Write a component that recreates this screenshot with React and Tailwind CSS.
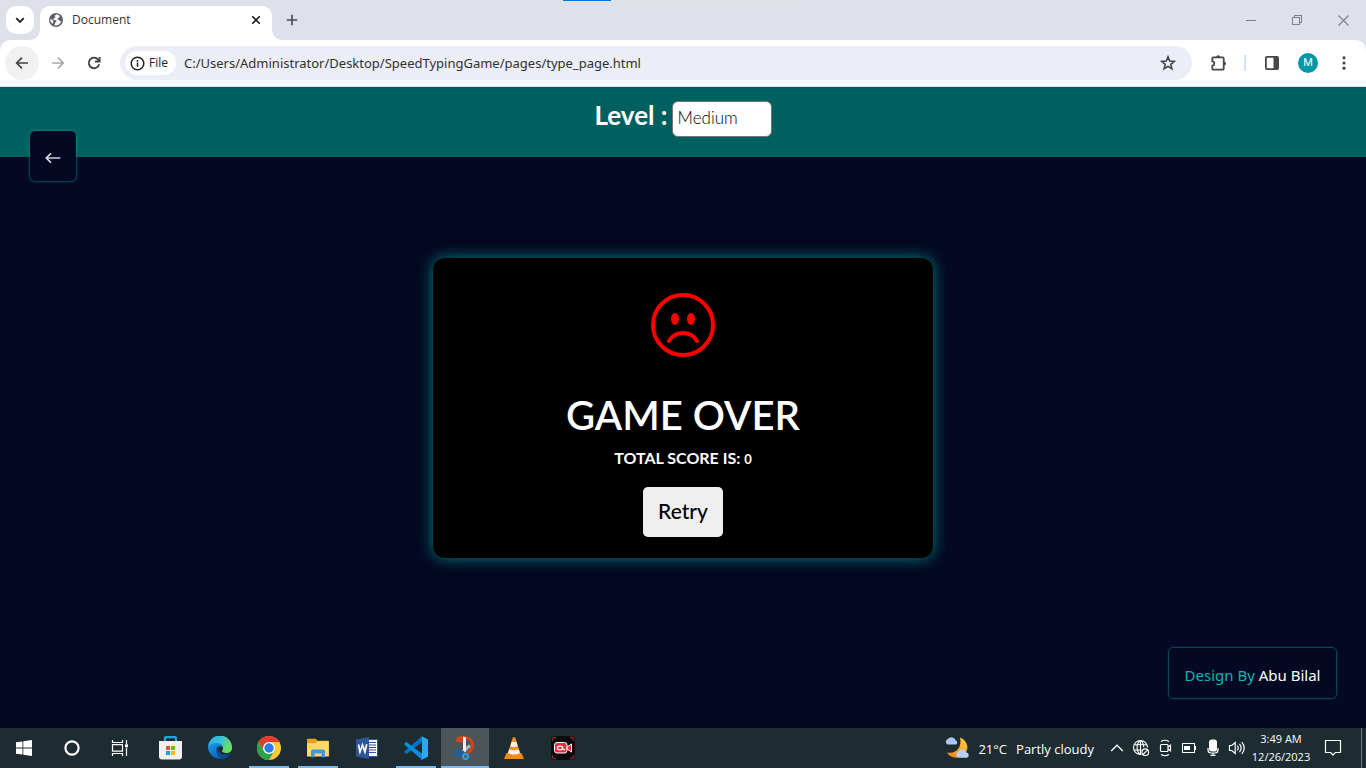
import React from "react";

/* ---------- Browser chrome ---------- */

function TabStrip() {
  return (
    <div className="relative flex h-10 items-start bg-[#dee1e9] pl-1.5">
      <div className="absolute left-1/2 top-0 ml-[-120px] flex h-px w-60">
        <span className="w-12 bg-[#0078d7]" />
        <span className="flex-1 bg-[#e4e4e6]" />
      </div>
      <button
        type="button"
        aria-label="Search tabs"
        className="mt-1.5 flex h-7 w-7 items-center justify-center rounded-[10px] bg-white"
      >
        <svg width="12" height="12" viewBox="0 0 12 12" fill="none" stroke="#1f2023" strokeWidth="1.8">
          <path d="M2.200 4.200 6 7.900l3.800-3.700" />
        </svg>
      </button>
      <div className="relative ml-1.5 mt-1.5 flex h-[34px] w-[232px] items-center rounded-t-[10px] bg-white pb-1.5 pl-2 pr-2">
        <svg className="absolute -left-2.5 bottom-0" width="10" height="10" viewBox="0 0 10 10">
          <path d="M10 0v10H0A10 10 0 0 0 10 0Z" fill="#fff" />
        </svg>
        <svg className="absolute -right-2.5 bottom-0" width="10" height="10" viewBox="0 0 10 10">
          <path d="M0 0v10h10A10 10 0 0 1 0 0Z" fill="#fff" />
        </svg>
        <svg width="16" height="16" viewBox="0 0 16 16">
          <circle cx="8" cy="8" r="7" fill="#5b5e63" />
          <path
            d="M9.2 2.3c-.6.5-2.2.6-2.4 1.6-.1.7.6.8.5 1.5-.2.9-1.700.7-1.900 1.500-.1.7.6 1 1.500 1 1.300 0 1.600.5 1.600 1.200 0 .8-1.300.9-1.300 1.800 0 .7-.4 1.600-.9 2.600 3.800.6 6.300-1.500 7.100-4.500-.8.4-1.600.3-2-.4-.3-.7-.9-.7-1.500-1-.9-.5-.4-1.700.6-1.700.9 0 .8-1.500 1.200-2C11 3.200 10.200 2.600 9.200 2.300Z"
            fill="#fff"
          />
          <path d="M2.200 7.100c.9.1 1.700.8 2.700 1.100.7.200.8.9.400 1.400-.4.500-.200 1.500-.5 2.300C3 10.800 2 9 2.200 7.100Z" fill="#fff" />
        </svg>
        <span className="ml-2 flex-1 text-[12px] leading-4 text-[#303236]">Document</span>
        <button type="button" aria-label="Close tab" className="flex h-4 w-4 items-center justify-center">
          <svg width="10" height="10" viewBox="0 0 10 10" stroke="#1f2023" strokeWidth="1.6">
            <path d="m1.200 1.200 7.600 7.600M8.800 1.200 1.200 8.800" />
          </svg>
        </button>
      </div>
      <button type="button" aria-label="New tab" className="ml-1.5 mt-1.5 flex h-7 w-7 items-center justify-center">
        <svg width="12" height="12" viewBox="0 0 12 12" stroke="#45474a" strokeWidth="1.6">
          <path d="M6 .8v10.400M.8 6h10.400" />
        </svg>
      </button>
      <div className="ml-auto flex h-10 text-[#7d7f85]">
        <button type="button" aria-label="Minimize" className="flex w-[46px] items-center justify-center">
          <svg width="10" height="10" viewBox="0 0 10 10" stroke="currentColor" shapeRendering="crispEdges">
            <path d="M0 5.500h10" />
          </svg>
        </button>
        <button type="button" aria-label="Restore" className="flex w-[46px] items-center justify-center">
          <svg width="11" height="11" viewBox="0 0 11 11" fill="none" stroke="currentColor" shapeRendering="crispEdges">
            <path d="M.5 2.500h7v7h-7zM2.500 2.500v-2h7v7h-2" />
          </svg>
        </button>
        <button type="button" aria-label="Close" className="flex w-[46px] items-center justify-center">
          <svg width="11" height="11" viewBox="0 0 11 11" stroke="currentColor" strokeWidth="1.100">
            <path d="m.5.5 10 10M10.500.5l-10 10" />
          </svg>
        </button>
      </div>
    </div>
  );
}

function Toolbar() {
  return (
    <div className="bg-[#dee1e9]">
      <div className="flex h-[47px] items-center rounded-t-[10px] border-b border-[#dfe3e6] bg-white px-[5px]">
        <button type="button" aria-label="Back" className="flex h-[34px] w-[34px] items-center justify-center rounded-full bg-[#f1f1f1]">
          <svg width="14" height="14" viewBox="0 0 14 14" fill="none" stroke="#3f4144" strokeWidth="1.700">
            <path d="M13 7H2M7 1.700 1.700 7 7 12.300" />
          </svg>
        </button>
        <button type="button" aria-label="Forward" className="ml-[2px] flex h-[34px] w-[34px] items-center justify-center">
          <svg width="14" height="14" viewBox="0 0 14 14" fill="none" stroke="#a9abad" strokeWidth="1.700">
            <path d="M1 7h11M7 1.700 12.300 7 7 12.300" />
          </svg>
        </button>
        <button type="button" aria-label="Reload" className="ml-[2px] flex h-[34px] w-[34px] items-center justify-center">
          <svg width="14" height="14" viewBox="0 0 14 14" fill="none" stroke="#3f4144" strokeWidth="1.800">
            <path d="M12.200 8.300A5.300 5.300 0 1 1 11.200 3.600L12.500 5" />
            <path d="M12.600.9v4.600H8" />
          </svg>
        </button>
        <div className="ml-[9px] flex h-[34px] flex-1 items-center rounded-full bg-[#ebeef7] pl-[5px] pr-4">
          <button type="button" className="flex h-6 w-[51px] items-center rounded-full bg-white pl-[5px] text-[12px] font-medium leading-4 text-[#202124]">
            <svg className="mr-1" width="15" height="15" viewBox="0 0 16 16" fill="none" stroke="#202124" strokeWidth="1.600">
              <circle cx="8" cy="8" r="6.700" />
              <path d="M8 7v4.500M8 4.300v1.700" />
            </svg>
            File
          </button>
          <input
            type="text"
            aria-label="Address"
            defaultValue="C:/Users/Administrator/Desktop/SpeedTypingGame/pages/type_page.html"
            className="ml-2 h-6 min-w-0 flex-1 bg-transparent font-['Noto_Sans',sans-serif] text-[13px] text-[#303134] outline-none"
          />
          <button type="button" aria-label="Bookmark this page">
            <svg width="16" height="16" viewBox="0 0 16 16" fill="none" stroke="#45474a" strokeWidth="1.600">
              <path d="m8 1.900 1.700 4.200 4.500.4-3.400 2.900 1.100 4.400L8 11.400l-3.900 2.400 1.100-4.400-3.400-2.900 4.500-.4Z" />
            </svg>
          </button>
        </div>
        <button type="button" aria-label="Extensions" className="ml-[18px]">
          <svg width="18" height="18" viewBox="0 0 18 18" fill="none">
            <path d="M2.300 4.300q0-1 1-1h9.400q1 0 1 1v10.400q0 1-1 1H3.300q-1 0-1-1v-3c2.700-.2 2.700-4.200 0-4.400Z" stroke="#45474a" strokeWidth="1.800" />
            <path d="M6.200 3.200a2 2 0 0 1 4 0ZM14 7.500a2 2 0 0 1 0 4Z" fill="#45474a" />
          </svg>
        </button>
        <span className="ml-4 h-4 w-0.5 bg-[#d2e2fb]" />
        <button type="button" aria-label="Side panel" className="ml-[18px]">
          <svg width="16" height="16" viewBox="0 0 16 16" fill="none">
            <rect x="1.900" y="1.900" width="12.200" height="12.200" rx="1" stroke="#45474a" strokeWidth="1.800" />
            <path d="M9.500 2h4.500v12H9.500z" fill="#45474a" />
          </svg>
        </button>
        <button type="button" aria-label="Profile" className="ml-[18px] h-5 w-5 rounded-full bg-[#0097a7] text-center font-['Roboto',sans-serif] text-[11px] leading-5 text-white">
          M
        </button>
        <button type="button" aria-label="Menu" className="ml-[18px] mr-[9px]">
          <svg width="16" height="16" viewBox="0 0 16 16" fill="#45474a">
            <circle cx="8" cy="2.800" r="1.600" />
            <circle cx="8" cy="8" r="1.600" />
            <circle cx="8" cy="13.200" r="1.600" />
          </svg>
        </button>
      </div>
    </div>
  );
}

/* ---------- Game page ---------- */

function GamePage() {
  return (
    <div className="relative flex flex-1 flex-col bg-[#040822] font-['Lato',sans-serif]">
      <header className="flex h-[70px] items-start justify-center bg-[#005f5f] pt-3.5">
        <label htmlFor="level" className="mr-1 text-[26px] font-bold leading-7 text-white">
          Level :
        </label>
        <select
          id="level"
          defaultValue="Medium"
          className="h-9 w-[100px] appearance-none rounded-md border border-[#767676] bg-white px-[5px] pb-0.5 text-[17px] font-light leading-6 text-black"
        >
          <option>Easy</option>
          <option>Medium</option>
          <option>Hard</option>
        </select>
      </header>
      <a
        href="#home"
        aria-label="Back to home"
        className="absolute left-[30px] top-11 flex h-[50px] w-[46px] items-center justify-center rounded-[5px] bg-[#040822] pt-1 shadow-[0_0_3px_#00a0a0]"
      >
        <svg width="16" height="12" viewBox="0 0 16 12" fill="none">
          <path d="M1.500 6H15.300" stroke="#b9b9cc" strokeWidth="1.700" />
          <path d="M6 1.200 1.300 6 6 10.800" stroke="#e4e4ee" strokeWidth="1.600" />
        </svg>
      </a>
      <main className="flex flex-1 items-center justify-center pb-[70px]">
        <section className="flex h-[300px] w-[500px] flex-col items-center rounded-xl bg-black pt-[35px] text-white shadow-[0_0_15px_#008080]">
          <svg width="64" height="64" viewBox="0 0 64 64" fill="none">
            <circle cx="32" cy="32" r="30" stroke="#f00" strokeWidth="4" />
            <ellipse cx="24" cy="26" rx="4" ry="6" fill="#f00" />
            <ellipse cx="40" cy="26" rx="4" ry="6" fill="#f00" />
            <path d="M18 48a16.200 16.200 0 0 1 28 0" stroke="#f00" strokeWidth="4" strokeLinecap="round" />
          </svg>
          <h1 className="mt-[34px] text-[40px] font-semibold leading-[48px]">GAME OVER</h1>
          <p className="mt-[9px] text-[16px] font-bold leading-5">
            TOTAL SCORE IS: <span className="text-[13px] leading-4">0</span>
          </p>
          <button type="button" className="mt-[19px] h-[50px] w-20 rounded-[5px] bg-[#efefef] pb-0.5 text-[21px] font-medium text-black">
            Retry
          </button>
        </section>
      </main>
      <footer className="absolute bottom-[29px] right-[29px] flex h-[52px] w-[169px] items-center justify-center rounded-[5px] border border-[#024a50] pt-1 font-['Noto_Sans',sans-serif] text-[15px] text-[#08b5b5] shadow-[0_0_3px_#00505080]">
        <span>
          Design By <span className="text-white">Abu Bilal</span>
        </span>
      </footer>
    </div>
  );
}

/* ---------- Taskbar icons ---------- */

const WindowsIcon = () => (
  <svg width="16" height="16" viewBox="0 0 16 16" fill="#fff">
    <path d="M0 2.300 6.500 1.400v6.200H0zM7.300 1.300 16 0v7.600H7.300zM0 8.400h6.500v6.200L0 13.700zM7.300 8.400H16V16l-8.700-1.300z" />
  </svg>
);

const CortanaIcon = () => (
  <svg width="16" height="16" viewBox="0 0 16 16" fill="none">
    <circle cx="8" cy="8" r="6.600" stroke="#fff" strokeWidth="2.200" />
  </svg>
);

const TaskViewIcon = () => (
  <svg width="18" height="16" viewBox="0 0 18 16" fill="none" stroke="#fff" strokeWidth="1.200">
    <path d="M1.500 0v2.500h10V0M1.500 16v-2.500h10V16M1.500 4.700h10v6.500h-10zM15.500 0v4M15.500 8v8" />
    <path d="M14 4.300h3v3h-3z" fill="#fff" stroke="none" />
  </svg>
);

const StoreIcon = () => (
  <svg width="24" height="24" viewBox="0 0 24 24">
    <path d="M6 6V2.200q0-1 1-1h9q1 0 1 1V6" fill="none" stroke="#22a7e5" strokeWidth="2.200" />
    <path d="M0 5h23v15.500q0 3-3 3H3q-3 0-3-3z" fill="#f0f0f0" />
    <path d="M7 10h4v4H7z" fill="#f25022" />
    <path d="M12 10h4v4h-4z" fill="#7fba00" />
    <path d="M7 15h4v4H7z" fill="#00a4ef" />
    <path d="M12 15h4v4h-4z" fill="#ffb900" />
  </svg>
);

const EdgeIcon = () => (
  <svg width="24" height="24" viewBox="0 0 24 24">
    <defs>
      <linearGradient id="edge-top" x1="0" y1="0" x2="1" y2=".4">
        <stop offset="0" stopColor="#2aa9e8" />
        <stop offset=".5" stopColor="#35c1dc" />
        <stop offset="1" stopColor="#6be05c" />
      </linearGradient>
      <linearGradient id="edge-left" x1="0" y1="0" x2=".6" y2="1">
        <stop offset="0" stopColor="#1a9ae3" />
        <stop offset="1" stopColor="#0c62c1" />
      </linearGradient>
    </defs>
    <path d="M0 12a12 12 0 0 1 24-1c.3 4-2.500 6-5.600 6-2.900 0-4.400-1-4.400-1.900 0-.8 1.100-1.200 1.100-3.100 0-2.400-2.700-4.300-6-4.300C4.500 7.700.8 9.500 0 12Z" fill="url(#edge-top)" />
    <path d="M0 12c.4-3 4-5 8.500-5 4 0 6.600 2.300 6.600 5-1.300-2-3.800-2.300-5-1-2 1.800-1.600 5.500.8 8 1.700 1.800 3.800 2.700 6 2.700A12 12 0 0 1 0 12Z" fill="url(#edge-left)" />
    <path d="M8.300 13.500c0-2 1.200-3 2-3.200-1.300 2.900.5 8.200 6.200 8.200 2.400 0 4.400-.9 5.500-1.400.5-.1.6.2.3.7a12 12 0 0 1-6.700 5.600C11.500 23 8.300 18 8.300 13.500Z" fill="#114a8b" />
  </svg>
);

const ChromeIcon = () => (
  <svg width="24" height="24" viewBox="0 0 24 24">
    <circle cx="12" cy="12" r="12" fill="#fcc934" />
    <path d="M12 6H22.400A12 12 0 0 0 1.600 6l5.200 9Z" fill="#e33b2e" />
    <path d="M1.600 6A12 12 0 0 0 12 24l5.200-9-10.400 0Z" fill="#2ba24c" />
    <circle cx="12" cy="12" r="6" fill="#fff" />
    <circle cx="12" cy="12" r="4.700" fill="#2a7de9" />
  </svg>
);

const FolderIcon = () => (
  <svg width="24" height="24" viewBox="0 0 24 24">
    <path d="M1 3.500q0-.7.7-.7h8l2 2H22q.8 0 .8.800V20H1z" fill="#e3a21a" />
    <path d="M1 7.200h8.500l2-2H22.800V20.500H1z" fill="#ffd86b" />
    <path d="M5 21.200V15q0-1.600 1.600-1.600h10.800Q19 13.400 19 15v6.200h-3.500v-3.700h-7v3.700z" fill="#3d9ae0" />
  </svg>
);

const WordIcon = () => (
  <svg width="24" height="24" viewBox="0 0 24 24">
    <path d="M12 3.500h10.500v17H12z" fill="#fff" stroke="#2b579a" />
    <path d="M14 6.500h7M14 9h7M14 11.500h7M14 14h7M14 16.500h7" stroke="#2b579a" />
    <path d="M1 3.500 14 1v22L1 20.500z" fill="#2b579a" />
    <path d="m3.500 8.500 1.500 7.300L7.500 9l2.400 7 1.800-7.700" fill="none" stroke="#fff" strokeWidth="1.700" />
  </svg>
);

const CodeIcon = () => (
  <svg width="24" height="24" viewBox="0 0 24 24">
    <path d="m.4 16.300 1.500 1.300q.5.400 1 .1L18 6.300V.3L.4 15.200q-.5.500 0 1.100Z" fill="#0072c0" />
    <path d="M.4 7.700 1.900 6.300q.5-.4 1-.1L18 17.700v6L.4 8.800q-.5-.500 0-1.100Z" fill="#0a8ddb" />
    <path d="M17.600.2 23 2.700q1 .5 1 1.500v15.600q0 1-1 1.500l-5.400 2.500q-.8.300-1.400-.3 1.800.7 1.800-1.200V1.700q0-1.900-1.800-1.200.6-.6 1.400-.3Z" fill="#2aa8f2" />
  </svg>
);

const SnipIcon = () => (
  <svg width="24" height="24" viewBox="0 0 24 24" fill="none">
    <path d="M10 4.800C6.500 5.200 4.500 4.600 4.200 4 5.200 2 8.500 1.200 11.500 1.500c5.500.6 8.700 4 8 8.700-.4 3-2.500 5.500-5 6.300" stroke="#d5431b" strokeWidth="3" />
    <path d="M17 9.500 10 15.500" stroke="#aeb4b8" strokeWidth="3" />
    <path d="M10 .8q1.200-.6 3 1V16l-3-1z" fill="#eceeef" />
    <circle cx="4.500" cy="17.300" r="2.400" stroke="#0f63b5" strokeWidth="2.200" />
    <circle cx="12.500" cy="20.500" r="2.500" stroke="#2f9fe6" strokeWidth="2.200" />
    <path d="m7 17 4-1.500" stroke="#0f63b5" strokeWidth="2" />
  </svg>
);

const VlcIcon = () => (
  <svg width="24" height="24" viewBox="0 0 24 24">
    <path d="M4.500 17h15l2.500 6H2z" fill="#f58a0b" />
    <path d="M10.800 1.500q1.200-.8 2.400 0L18.500 18q-6.500 4-13 0z" fill="#f5901e" />
    <path d="m9.800 5.500-1.500 4.800q3.700 1.500 7.400 0l-1.500-4.800q-2.200 1-4.400 0ZM7.200 13.300l-1.100 3.800q5.900 3 11.800 0l-1.100-3.800q-4.800 2-9.600 0Z" fill="#f2f2f2" />
  </svg>
);

const RecorderIcon = () => (
  <svg width="24" height="24" viewBox="0 0 24 24" fill="none">
    <rect width="24" height="24" rx="4" fill="#0b0b0c" />
    <path d="M1.500 5V3.200Q1.500 1.500 3.200 1.500H5M19 1.500h1.800q1.700 0 1.700 1.700V5M22.500 19v1.800q0 1.700-1.700 1.700H19M5 22.500H3.200q-1.700 0-1.700-1.700V19" stroke="#8e2630" strokeWidth="1.300" />
    <rect x="3.500" y="6.500" width="12.500" height="10.500" rx="2.500" fill="#ea2d45" stroke="#fff" />
    <path d="m16 11 4.500-3v8L16 13z" fill="#ea2d45" stroke="#fff" />
    <ellipse cx="9" cy="12" rx="2.600" ry="1.800" stroke="#fff" strokeWidth="1.200" />
    <path d="m11 12.500 3 1.500" stroke="#fff" strokeWidth="1.200" />
  </svg>
);

const apps = [
  { name: "Microsoft Store", Icon: StoreIcon, state: "idle" },
  { name: "Edge", Icon: EdgeIcon, state: "idle" },
  { name: "Chrome", Icon: ChromeIcon, state: "open" },
  { name: "File Explorer", Icon: FolderIcon, state: "open" },
  { name: "Word", Icon: WordIcon, state: "idle" },
  { name: "Visual Studio Code", Icon: CodeIcon, state: "open" },
  { name: "Snipping Tool", Icon: SnipIcon, state: "active" },
  { name: "VLC", Icon: VlcIcon, state: "idle" },
  { name: "Screen Recorder", Icon: RecorderIcon, state: "idle" },
];

const appStyles = {
  idle: "border-transparent",
  open: "border-transparent",
  active: "border-[#76b9ed] bg-[#4a5659]",
};

function TrayButton({ label, children }) {
  return (
    <button type="button" aria-label={label} className="flex w-6 items-center justify-center">
      {children}
    </button>
  );
}

function Taskbar() {
  return (
    <div className="flex h-10 items-stretch bg-[#1c2c31] text-white">
      <button type="button" aria-label="Start" className="flex w-12 items-center justify-center">
        <WindowsIcon />
      </button>
      <button type="button" aria-label="Cortana" className="flex w-12 items-center justify-center">
        <CortanaIcon />
      </button>
      <button type="button" aria-label="Task View" className="flex w-12 items-center justify-center">
        <TaskViewIcon />
      </button>
      <div className="ml-[3px] flex gap-px">
        {apps.map(({ name, Icon, state }) => (
          <button
            key={name}
            type="button"
            aria-label={name}
            className={`relative flex w-12 items-center justify-center border-b-2 pt-0.5 ${appStyles[state]}`}
          >
            <Icon />
            {state === "open" && <span className="absolute inset-x-1 -bottom-0.5 h-0.5 bg-[#76b9ed]" />}
          </button>
        ))}
      </div>
      <button type="button" className="ml-auto mr-[11px] flex items-center text-[13px] leading-5">
        <svg className="mr-2" width="26" height="24" viewBox="0 0 26 24">
          <defs>
            <linearGradient id="moon" x1="1" y1="0" x2="0" y2="1">
              <stop offset="0" stopColor="#ffcf3f" />
              <stop offset="1" stopColor="#ef7d1a" />
            </linearGradient>
          </defs>
          <path d="M16 1.500C24.500 5 26 14.500 19 19.500 13 23.500 5.500 21.500 3 16.500 11 18.500 18.500 12 16 1.500Z" fill="url(#moon)" />
          <path d="M3.500 8.500a3 3 0 0 1 .3-5.500 4.500 4.500 0 0 1 7.700 1.200 2.300 2.300 0 0 1 .5 4.300Z" fill="#a9c6f4" />
          <path d="M14.500 21.800a3.200 3.200 0 0 1-.3-6 4.600 4.600 0 0 1 8.300.8 2.700 2.700 0 0 1 .5 5.200Z" fill="#b9d0f6" />
        </svg>
        <span className="mr-[9px] pt-0.5">21°C</span>
        <span className="pt-0.5">Partly cloudy</span>
      </button>
      <TrayButton label="Show hidden icons">
        <svg width="14" height="8" viewBox="0 0 14 8" fill="none" stroke="#fff" strokeWidth="1.300">
          <path d="m1.200 7 5.800-5.800L12.800 7" />
        </svg>
      </TrayButton>
      <TrayButton label="Network">
        <svg width="18" height="18" viewBox="0 0 18 18" fill="none" stroke="#fff" strokeWidth="1.100">
          <path d="M9.500 15.500H8A7 7 0 1 1 15.500 8.500M8.500 1.500c-4.600 3.500-4.600 10.500 0 14M8.500 1.500c2.300 1.800 3.300 4.300 3.300 6.800M2 5.700h13M1.500 11h8M8.500 1.500v14" />
          <circle cx="13.300" cy="13.200" r="3.300" />
          <path d="m11 15.500 4.600-4.600" />
        </svg>
      </TrayButton>
      <TrayButton label="Meet Now">
        <svg width="16" height="18" viewBox="0 0 16 18" fill="none" stroke="#fff" strokeWidth="1.200">
          <path d="M4.500 5.500h5.500q1 0 1 1v5q0 1-1 1H4.500q-1 0-1-1v-5q0-1 1-1ZM11 8l2.500-1.800v5.600L11 10M4 2.500q4-2.500 8 0M4 15.500q4 2.500 8 0" />
        </svg>
      </TrayButton>
      <TrayButton label="Battery">
        <svg width="16" height="10" viewBox="0 0 16 10" fill="none" stroke="#fff" shapeRendering="crispEdges">
          <path d="M1.500.5h12v9h-12zM14.500 3v4" />
          <path d="M3 3h6v4H3z" fill="#fff" stroke="none" />
        </svg>
      </TrayButton>
      <TrayButton label="Microphone">
        <svg width="12" height="18" viewBox="0 0 12 18" fill="none" stroke="#fff" strokeWidth="1.200">
          <rect x="2.600" y="1" width="6.800" height="11" rx="2" fill="#fff" />
          <path d="M1 9v2q0 3 3 3h4q3 0 3-3V9M6 14v2.400M3.500 16.400h5" />
        </svg>
      </TrayButton>
      <TrayButton label="Volume">
        <svg width="18" height="16" viewBox="0 0 18 16" fill="none" stroke="#fff" strokeWidth="1.200">
          <path d="M1.500 5.500h2.300L7.200 2.500v11L3.800 10.500H1.500zM9.300 5.500q1.800 2.500 0 5M11.500 3.800q3.300 4.200 0 8.400M13.800 2.200q4.800 5.800 0 11.600" />
        </svg>
      </TrayButton>
      <button type="button" className="flex w-16 flex-col items-center justify-center text-[11px] leading-[18px]">
        <span>3:49 AM</span>
        <span>12/26/2023</span>
      </button>
      <button type="button" aria-label="Notifications" className="mr-2 flex w-10 items-center justify-center">
        <svg width="18" height="18" viewBox="0 0 18 18" fill="none" stroke="#fff" strokeWidth="1.200">
          <path d="M1.500 1.500h15v12h-5.200L9 16 6.700 13.500H1.500z" />
        </svg>
      </button>
      <button type="button" aria-label="Show desktop" className="w-[5px] border-l border-[#6f7a7d]" />
    </div>
  );
}

export default function App() {
  return (
    <div className="flex min-h-screen flex-col font-['Open_Sans',sans-serif]">
      <TabStrip />
      <Toolbar />
      <GamePage />
      <Taskbar />
    </div>
  );
}
